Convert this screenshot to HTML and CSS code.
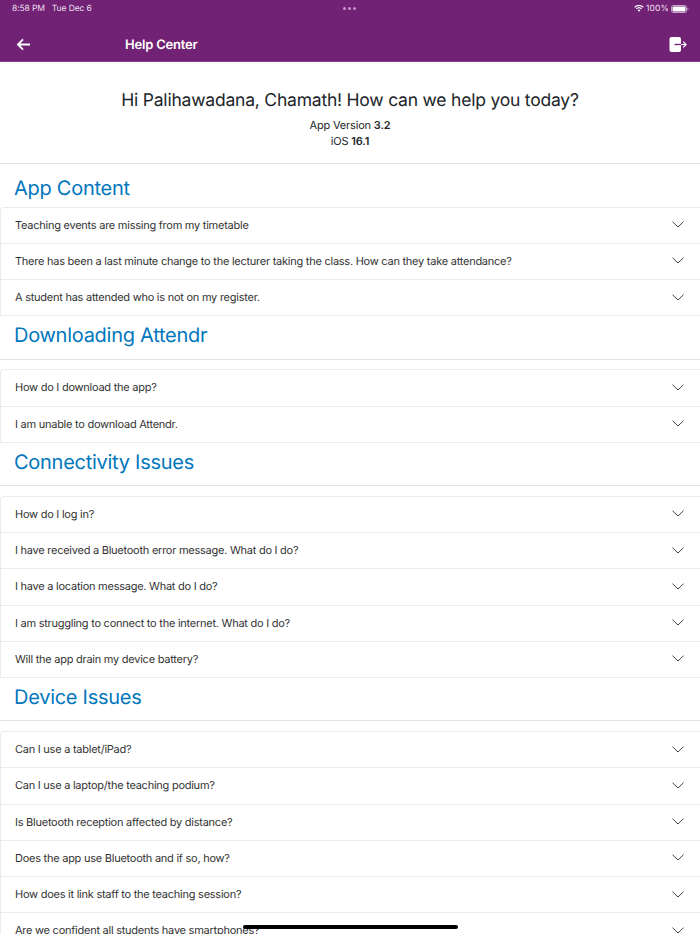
FILE: index.html
```html
<!DOCTYPE html>
<html lang="en">
<head>
<meta charset="utf-8">
<title>Help Center</title>
<link rel="stylesheet" href="styles.css">
</head>
<body>
<div class="page">
  <header class="top">
    <div class="status">
      <span class="status-time">8:58 PM&nbsp;&nbsp; Tue Dec 6</span>
      <span class="status-dots"><i></i><i></i><i></i></span>
      <span class="status-right">
        <svg class="wifi" viewBox="0 0 14 10" width="10" height="7"><path d="M7 9.600 4.900 7.400a3 3 0 0 1 4.200 0zM3.700 6.200 2.600 5a6.300 6.300 0 0 1 8.800 0l-1.100 1.200a4.700 4.700 0 0 0-6.600 0zM1.400 3.800.2 2.600a9.700 9.700 0 0 1 13.600 0l-1.200 1.200a8 8 0 0 0-11.200 0z" fill="#fff"/></svg>
        <span class="status-pct">100%</span>
        <svg class="battery" viewBox="0 0 18 8" width="18" height="8"><rect x=".5" y=".5" width="15" height="7" rx="1.800" fill="none" stroke="#c9a9cf"/><rect x="1.500" y="1.500" width="13" height="5" rx="1" fill="#fff"/><path d="M16.500 2.800v2.400c.6-.2 1-.6 1-1.200s-.4-1-1-1.200z" fill="#c9a9cf"/></svg>
      </span>
    </div>
    <nav class="nav">
      <svg class="back" viewBox="0 0 16 14" width="15" height="13"><path d="M15 7H2M7.500 1.500 2 7l5.500 5.500" fill="none" stroke="#fff" stroke-width="2"/></svg>
      <span class="nav-title">Help Center</span>
      <svg class="logout" viewBox="0 0 18 15" width="18" height="15"><rect x=".5" width="11.500" height="15" rx="2" fill="#fff"/><path d="M5.500 7.500H12" fill="none" stroke="#712274" stroke-width="1.300"/><path d="M12 7.500h5M14.200 4.600l2.900 2.900-2.900 2.900" fill="none" stroke="#fff" stroke-width="1.200"/></svg>
    </nav>
  </header>

  <section class="intro">
    <h1>Hi Palihawadana, Chamath! How can we help you today?</h1>
    <p>App Version <b>3.2</b></p>
    <p>iOS <b>16.1</b></p>
  </section>

  <section>
    <h2 class="heading heading-first">App Content</h2>
    <ul class="faq">
      <li>Teaching events are missing from my timetable<svg class="chev" viewBox="0 0 12 7"><path d="M.5.700 6 6 11.500.700"/></svg></li>
      <li>There has been a last minute change to the lecturer taking the class. How can they take attendance?<svg class="chev" viewBox="0 0 12 7"><path d="M.5.700 6 6 11.500.700"/></svg></li>
      <li>A student has attended who is not on my register.<svg class="chev" viewBox="0 0 12 7"><path d="M.5.700 6 6 11.500.700"/></svg></li>
    </ul>
  </section>

  <section>
    <h2 class="heading">Downloading Attendr</h2>
    <ul class="faq">
      <li>How do I download the app?<svg class="chev" viewBox="0 0 12 7"><path d="M.5.700 6 6 11.500.700"/></svg></li>
      <li>I am unable to download Attendr.<svg class="chev" viewBox="0 0 12 7"><path d="M.5.700 6 6 11.500.700"/></svg></li>
    </ul>
  </section>

  <section>
    <h2 class="heading">Connectivity Issues</h2>
    <ul class="faq">
      <li>How do I log in?<svg class="chev" viewBox="0 0 12 7"><path d="M.5.700 6 6 11.500.700"/></svg></li>
      <li>I have received a Bluetooth error message. What do I do?<svg class="chev" viewBox="0 0 12 7"><path d="M.5.700 6 6 11.500.700"/></svg></li>
      <li>I have a location message. What do I do?<svg class="chev" viewBox="0 0 12 7"><path d="M.5.700 6 6 11.500.700"/></svg></li>
      <li>I am struggling to connect to the internet. What do I do?<svg class="chev" viewBox="0 0 12 7"><path d="M.5.700 6 6 11.500.700"/></svg></li>
      <li>Will the app drain my device battery?<svg class="chev" viewBox="0 0 12 7"><path d="M.5.700 6 6 11.500.700"/></svg></li>
    </ul>
  </section>

  <section>
    <h2 class="heading">Device Issues</h2>
    <ul class="faq">
      <li>Can I use a tablet/iPad?<svg class="chev" viewBox="0 0 12 7"><path d="M.5.700 6 6 11.500.700"/></svg></li>
      <li>Can I use a laptop/the teaching podium?<svg class="chev" viewBox="0 0 12 7"><path d="M.5.700 6 6 11.500.700"/></svg></li>
      <li>Is Bluetooth reception affected by distance?<svg class="chev" viewBox="0 0 12 7"><path d="M.5.700 6 6 11.500.700"/></svg></li>
      <li>Does the app use Bluetooth and if so, how?<svg class="chev" viewBox="0 0 12 7"><path d="M.5.700 6 6 11.500.700"/></svg></li>
      <li>How does it link staff to the teaching session?<svg class="chev" viewBox="0 0 12 7"><path d="M.5.700 6 6 11.500.700"/></svg></li>
      <li>Are we confident all students have smartphones?<svg class="chev" viewBox="0 0 12 7"><path d="M.5.700 6 6 11.500.700"/></svg></li>
    </ul>
  </section>

  <div class="home-bar"></div>
</div>
</body>
</html>
```

FILE: styles.css
```css
* { box-sizing: border-box; }
html, body { margin: 0; padding: 0; height: 934px; overflow: hidden; background: #fff; }
body { font-family: Inter, "Liberation Sans", sans-serif; color: #212529; text-rendering: geometricPrecision; }
.page { position: relative; width: 700px; height: 934px; overflow: hidden; }

.top { height: 62px; background: #712274; color: #fff; padding-top: 1px; border-bottom: 1px solid #84408a; }
.status { height: 15px; padding: 0 11px 0 12px; display: flex; align-items: center; justify-content: space-between; font-size: 8.500px; letter-spacing: -.1px; position: relative; color: #ecdfee; }
.status-dots { position: absolute; left: 343px; top: 6px; display: flex; gap: 2px; }
.status-dots i { width: 3px; height: 3px; border-radius: 50%; background: #c795cb; }
.status-right { display: flex; align-items: center; gap: 2px; }
.status-pct { letter-spacing: .1px; }
.nav { height: 45px; padding: 12px 13px 0 16px; display: flex; align-items: center; position: relative; }
.nav-title { margin-left: 94px; font-size: 13px; font-weight: 600; letter-spacing: -.2px; flex: 1; }

.intro { height: 102px; padding-top: 28px; text-align: center; border-bottom: 1px solid #dee2e6; }
.intro h1 { margin: 0 0 6px; font-size: 17.500px; line-height: 21px; font-weight: 400; letter-spacing: -.21px; }
.intro p { margin: 0; font-size: 11px; line-height: 16px; letter-spacing: -.17px; }
.intro b { font-weight: 600; }

.heading { margin: 0; height: 43.250px; padding: 0 14px; font-size: 20px; line-height: 38px; font-weight: 400; letter-spacing: -.27px; color: #0277bd; border-bottom: 1px solid #dee2e6; }
.heading-first { height: 42.500px; border-bottom: 0; line-height: 48px; }
.heading + .faq { margin-top: 9.750px; }
.heading-first + .faq { margin-top: 0; }

.faq { list-style: none; margin: 0; padding: 0; border: 1px solid #e9ecef; border-width: 1px 0 0 1px; border-top-left-radius: 4px; }
.faq li { height: 36.250px; padding: 0 16px 1px 14px; display: flex; align-items: center; justify-content: space-between; font-size: 11px; letter-spacing: -.25px; color: #333; border-bottom: 1px solid #e9ecef; }
.chev { width: 12px; height: 7px; fill: none; stroke: #444; stroke-width: 1; }

.home-bar { position: absolute; left: 243px; bottom: 5px; width: 215px; height: 4px; border-radius: 2px; background: #000; }
```
